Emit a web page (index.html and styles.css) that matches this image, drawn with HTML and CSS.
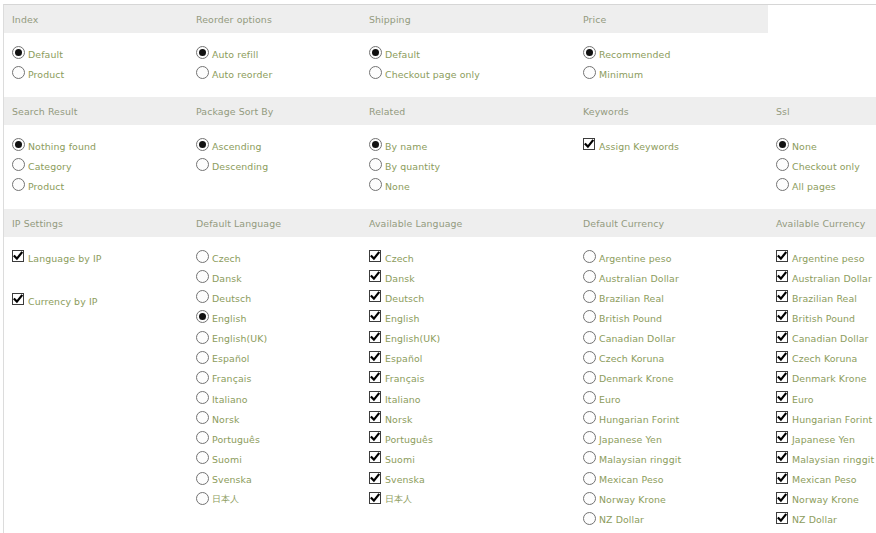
FILE: index.html
```html
<!DOCTYPE html>
<html>
<head>
<meta charset="utf-8">
<link rel="stylesheet" href="styles.css">
</head>
<body>
<div class="panel">
  <section class="group">
    <div class="head">Index</div>
    <div class="head">Reorder options</div>
    <div class="head">Shipping</div>
    <div class="head">Price</div>
    <div class="head blank"></div>
    <div class="body">
      <div class="opt"><span class="radio on"></span>Default</div>
      <div class="opt"><span class="radio"></span>Product</div>
    </div>
    <div class="body">
      <div class="opt"><span class="radio on"></span>Auto refill</div>
      <div class="opt"><span class="radio"></span>Auto reorder</div>
    </div>
    <div class="body">
      <div class="opt"><span class="radio on"></span>Default</div>
      <div class="opt"><span class="radio"></span>Checkout page only</div>
    </div>
    <div class="body">
      <div class="opt"><span class="radio on"></span>Recommended</div>
      <div class="opt"><span class="radio"></span>Minimum</div>
    </div>
    <div class="body"></div>
  </section>

  <section class="group">
    <div class="head">Search Result</div>
    <div class="head">Package Sort By</div>
    <div class="head">Related</div>
    <div class="head">Keywords</div>
    <div class="head">Ssl</div>
    <div class="body">
      <div class="opt"><span class="radio on"></span>Nothing found</div>
      <div class="opt"><span class="radio"></span>Category</div>
      <div class="opt"><span class="radio"></span>Product</div>
    </div>
    <div class="body">
      <div class="opt"><span class="radio on"></span>Ascending</div>
      <div class="opt"><span class="radio"></span>Descending</div>
    </div>
    <div class="body">
      <div class="opt"><span class="radio on"></span>By name</div>
      <div class="opt"><span class="radio"></span>By quantity</div>
      <div class="opt"><span class="radio"></span>None</div>
    </div>
    <div class="body">
      <div class="opt"><span class="check"><svg viewBox="0 0 10 10"><path d="M1.6 5.2 L3.9 7.6 L8.6 1.8"/></svg></span>Assign Keywords</div>
    </div>
    <div class="body">
      <div class="opt"><span class="radio on"></span>None</div>
      <div class="opt"><span class="radio"></span>Checkout only</div>
      <div class="opt"><span class="radio"></span>All pages</div>
    </div>
  </section>

  <section class="group">
    <div class="head">IP Settings</div>
    <div class="head">Default Language</div>
    <div class="head">Available Language</div>
    <div class="head">Default Currency</div>
    <div class="head">Available Currency</div>
    <div class="body">
      <div class="opt spaced"><span class="check"><svg viewBox="0 0 10 10"><path d="M1.6 5.2 L3.9 7.6 L8.6 1.8"/></svg></span>Language by IP</div>
      <div class="opt"><span class="check"><svg viewBox="0 0 10 10"><path d="M1.6 5.2 L3.9 7.6 L8.6 1.8"/></svg></span>Currency by IP</div>
    </div>
    <div class="body list">
      <div class="opt"><span class="radio"></span>Czech</div>
      <div class="opt"><span class="radio"></span>Dansk</div>
      <div class="opt"><span class="radio"></span>Deutsch</div>
      <div class="opt"><span class="radio on"></span>English</div>
      <div class="opt"><span class="radio"></span>English(UK)</div>
      <div class="opt"><span class="radio"></span>Español</div>
      <div class="opt"><span class="radio"></span>Français</div>
      <div class="opt"><span class="radio"></span>Italiano</div>
      <div class="opt"><span class="radio"></span>Norsk</div>
      <div class="opt"><span class="radio"></span>Português</div>
      <div class="opt"><span class="radio"></span>Suomi</div>
      <div class="opt"><span class="radio"></span>Svenska</div>
      <div class="opt"><span class="radio"></span>日本人</div>
    </div>
    <div class="body list">
      <div class="opt"><span class="check"><svg viewBox="0 0 10 10"><path d="M1.6 5.2 L3.9 7.6 L8.6 1.8"/></svg></span>Czech</div>
      <div class="opt"><span class="check"><svg viewBox="0 0 10 10"><path d="M1.6 5.2 L3.9 7.6 L8.6 1.8"/></svg></span>Dansk</div>
      <div class="opt"><span class="check"><svg viewBox="0 0 10 10"><path d="M1.6 5.2 L3.9 7.6 L8.6 1.8"/></svg></span>Deutsch</div>
      <div class="opt"><span class="check"><svg viewBox="0 0 10 10"><path d="M1.6 5.2 L3.9 7.6 L8.6 1.8"/></svg></span>English</div>
      <div class="opt"><span class="check"><svg viewBox="0 0 10 10"><path d="M1.6 5.2 L3.9 7.6 L8.6 1.8"/></svg></span>English(UK)</div>
      <div class="opt"><span class="check"><svg viewBox="0 0 10 10"><path d="M1.6 5.2 L3.9 7.6 L8.6 1.8"/></svg></span>Español</div>
      <div class="opt"><span class="check"><svg viewBox="0 0 10 10"><path d="M1.6 5.2 L3.9 7.6 L8.6 1.8"/></svg></span>Français</div>
      <div class="opt"><span class="check"><svg viewBox="0 0 10 10"><path d="M1.6 5.2 L3.9 7.6 L8.6 1.8"/></svg></span>Italiano</div>
      <div class="opt"><span class="check"><svg viewBox="0 0 10 10"><path d="M1.6 5.2 L3.9 7.6 L8.6 1.8"/></svg></span>Norsk</div>
      <div class="opt"><span class="check"><svg viewBox="0 0 10 10"><path d="M1.6 5.2 L3.9 7.6 L8.6 1.8"/></svg></span>Português</div>
      <div class="opt"><span class="check"><svg viewBox="0 0 10 10"><path d="M1.6 5.2 L3.9 7.6 L8.6 1.8"/></svg></span>Suomi</div>
      <div class="opt"><span class="check"><svg viewBox="0 0 10 10"><path d="M1.6 5.2 L3.9 7.6 L8.6 1.8"/></svg></span>Svenska</div>
      <div class="opt"><span class="check"><svg viewBox="0 0 10 10"><path d="M1.6 5.2 L3.9 7.6 L8.6 1.8"/></svg></span>日本人</div>
    </div>
    <div class="body list">
      <div class="opt"><span class="radio"></span>Argentine peso</div>
      <div class="opt"><span class="radio"></span>Australian Dollar</div>
      <div class="opt"><span class="radio"></span>Brazilian Real</div>
      <div class="opt"><span class="radio"></span>British Pound</div>
      <div class="opt"><span class="radio"></span>Canadian Dollar</div>
      <div class="opt"><span class="radio"></span>Czech Koruna</div>
      <div class="opt"><span class="radio"></span>Denmark Krone</div>
      <div class="opt"><span class="radio"></span>Euro</div>
      <div class="opt"><span class="radio"></span>Hungarian Forint</div>
      <div class="opt"><span class="radio"></span>Japanese Yen</div>
      <div class="opt"><span class="radio"></span>Malaysian ringgit</div>
      <div class="opt"><span class="radio"></span>Mexican Peso</div>
      <div class="opt"><span class="radio"></span>Norway Krone</div>
      <div class="opt"><span class="radio"></span>NZ Dollar</div>
    </div>
    <div class="body list">
      <div class="opt"><span class="check"><svg viewBox="0 0 10 10"><path d="M1.6 5.2 L3.9 7.6 L8.6 1.8"/></svg></span>Argentine peso</div>
      <div class="opt"><span class="check"><svg viewBox="0 0 10 10"><path d="M1.6 5.2 L3.9 7.6 L8.6 1.8"/></svg></span>Australian Dollar</div>
      <div class="opt"><span class="check"><svg viewBox="0 0 10 10"><path d="M1.6 5.2 L3.9 7.6 L8.6 1.8"/></svg></span>Brazilian Real</div>
      <div class="opt"><span class="check"><svg viewBox="0 0 10 10"><path d="M1.6 5.2 L3.9 7.6 L8.6 1.8"/></svg></span>British Pound</div>
      <div class="opt"><span class="check"><svg viewBox="0 0 10 10"><path d="M1.6 5.2 L3.9 7.6 L8.6 1.8"/></svg></span>Canadian Dollar</div>
      <div class="opt"><span class="check"><svg viewBox="0 0 10 10"><path d="M1.6 5.2 L3.9 7.6 L8.6 1.8"/></svg></span>Czech Koruna</div>
      <div class="opt"><span class="check"><svg viewBox="0 0 10 10"><path d="M1.6 5.2 L3.9 7.6 L8.6 1.8"/></svg></span>Denmark Krone</div>
      <div class="opt"><span class="check"><svg viewBox="0 0 10 10"><path d="M1.6 5.2 L3.9 7.6 L8.6 1.8"/></svg></span>Euro</div>
      <div class="opt"><span class="check"><svg viewBox="0 0 10 10"><path d="M1.6 5.2 L3.9 7.6 L8.6 1.8"/></svg></span>Hungarian Forint</div>
      <div class="opt"><span class="check"><svg viewBox="0 0 10 10"><path d="M1.6 5.2 L3.9 7.6 L8.6 1.8"/></svg></span>Japanese Yen</div>
      <div class="opt"><span class="check"><svg viewBox="0 0 10 10"><path d="M1.6 5.2 L3.9 7.6 L8.6 1.8"/></svg></span>Malaysian ringgit</div>
      <div class="opt"><span class="check"><svg viewBox="0 0 10 10"><path d="M1.6 5.2 L3.9 7.6 L8.6 1.8"/></svg></span>Mexican Peso</div>
      <div class="opt"><span class="check"><svg viewBox="0 0 10 10"><path d="M1.6 5.2 L3.9 7.6 L8.6 1.8"/></svg></span>Norway Krone</div>
      <div class="opt"><span class="check"><svg viewBox="0 0 10 10"><path d="M1.6 5.2 L3.9 7.6 L8.6 1.8"/></svg></span>NZ Dollar</div>
    </div>
  </section>
</div>
</body>
</html>
```

FILE: styles.css
```css
html, body {
  margin: 0;
  padding: 0;
  background: #ffffff;
  overflow: hidden;
}
body {
  padding: 4px 0 0 3px;
  font-family: "DejaVu Sans", Verdana, sans-serif;
  font-size: 9.4px;
  letter-spacing: 0.1px;
}
.panel {
  border-top: 1px solid #d6d6d6;
  border-left: 1px solid #dcdcdc;
  width: 873px;
  height: 540px;
}
.group {
  display: grid;
  grid-template-columns: 184px 173px 214px 193px 109px;
}
.head {
  background: #eeeeee;
  height: 28px;
  line-height: 29px;
  padding-left: 8px;
  color: #939a7e;
  white-space: nowrap;
}
.head.blank {
  background: #ffffff;
}
.body {
  padding: 11px 0 13px 8px;
  color: #8c9c5c;
  white-space: nowrap;
}
.list .opt {
  height: 20.15px;
}
.opt {
  height: 20px;
  display: flex;
  align-items: center;
}
.opt.spaced {
  margin-bottom: 23px;
}
.radio {
  box-sizing: border-box;
  width: 13px;
  height: 13px;
  border: 1px solid #737373;
  border-radius: 50%;
  background: #fdfdfd;
  margin-right: 3px;
  margin-top: -3px;
  flex: none;
  display: flex;
  align-items: center;
  justify-content: center;
}
.radio.on::after {
  content: "";
  width: 7px;
  height: 7px;
  border-radius: 50%;
  background: #111;
}
.check {
  box-sizing: border-box;
  width: 12px;
  height: 12px;
  border: 1px solid #3c3c3c;
  background: #fff;
  margin-right: 4px;
  margin-top: -4px;
  flex: none;
  display: flex;
}
.check svg {
  width: 10px;
  height: 10px;
}
.check path {
  fill: none;
  stroke: #000;
  stroke-width: 2.2;
  stroke-linecap: square;
}
```
